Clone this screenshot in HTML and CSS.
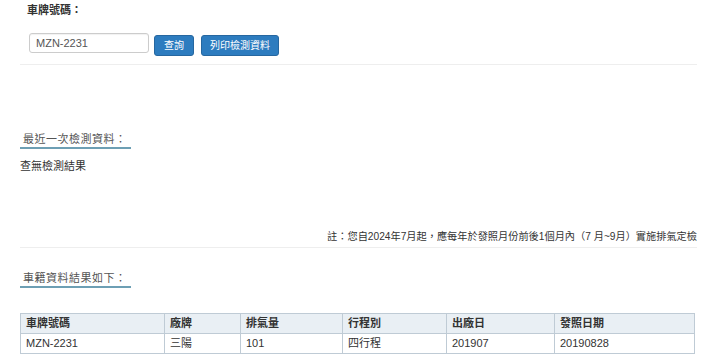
FILE: index.html
```html
<!doctype html>
<html>
<head>
    <meta charset="UTF-8">
    <title>車籍資料查詢</title>
    <link rel="stylesheet" href="styles.css">
</head>
<body>
<div class="m-page">
    <div class="m-query">
        <p class="lbl">車牌號碼：</p>
        <div class="ctrl">
            <input type="text" class="ipt" value="MZN-2231"/>
            <a href="javascript:void(0);" class="btn">查詢</a>
            <a href="javascript:void(0);" class="btn">列印檢測資料</a>
        </div>
    </div>
    <hr class="line"/>
    <h3 class="sec sec-first"><span>最近一次檢測資料：</span></h3>
    <p class="empty">查無檢測結果</p>
    <p class="note">註：您自2024年7月起，應每年於發照月份前後1個月內（7 月~9月）實施排氣定檢</p>
    <hr class="line line-note"/>
    <h3 class="sec sec-car"><span>車籍資料結果如下：</span></h3>
    <table class="tbl">
        <colgroup>
            <col style="width:144px"/><col style="width:76px"/><col style="width:102px"/>
            <col style="width:104px"/><col style="width:108px"/><col/>
        </colgroup>
        <thead>
            <tr><th>車牌號碼</th><th>廠牌</th><th>排氣量</th><th>行程別</th><th>出廠日</th><th>發照日期</th></tr>
        </thead>
        <tbody>
            <tr><td>MZN-2231</td><td>三陽</td><td>101</td><td>四行程</td><td>201907</td><td>20190828</td></tr>
        </tbody>
    </table>
</div>
</body>
</html>
```

FILE: styles.css
```css
html, body, h3, p { margin: 0; padding: 0; }
body { background: #fff; color: #333; font: 11px/16px "Liberation Sans", "Noto Sans CJK TC", sans-serif; }
.m-page { width: 677px; padding: 0 23px 0 20px; }
.m-query { padding-left: 9px; }
.m-query .lbl { font-weight: bold; line-height: 20px; margin-left: -2px; }
.m-query .ctrl { display: flex; align-items: flex-start; gap: 5px; height: 20px; margin-top: 13px; }
.m-query .ipt { box-sizing: border-box; width: 120px; height: 20px; margin: 0; padding: 0 6px; border: 1px solid #ccc; border-radius: 3px; font: 11px "Liberation Sans", "Noto Sans CJK TC", sans-serif; color: #555; box-shadow: inset 0 1px 1px rgba(0,0,0,.06); }
.m-query .btn { box-sizing: border-box; display: block; height: 21px; margin-top: 2px; padding: 0 9px; font-size: 10px; line-height: 19px; border: 1px solid #2667a0; border-radius: 3px; background: #2d7cbf; color: #fff; text-decoration: none; }
.m-query .btn + .btn { margin-left: 2px; padding: 0 8px; }
.line { height: 0; margin: 11px 0 0; border: 0; border-top: 1px solid #eee; }
.sec { font-size: 11px; font-weight: normal; color: #555; }
.sec span { display: inline-block; padding: 0 4px 1px 3px; line-height: 14px; letter-spacing: 0.5px; border-bottom: 2px solid #6d9fb4; }
.sec-first { margin-top: 66px; }
.empty { margin-top: 9px; }
.note { margin-top: 55px; font-size: 10.2px; text-align: right; }
.line-note { margin-top: 2px; }
.sec-car { margin-top: 22px; }
.tbl { width: 675px; margin-top: 25px; border-collapse: collapse; table-layout: fixed; }
.tbl th, .tbl td { height: 19px; padding: 0 5px; border: 1px solid #bfcbd5; text-align: left; line-height: 19px; }
.tbl th { background: #e9eff4; font-weight: bold; }
```
